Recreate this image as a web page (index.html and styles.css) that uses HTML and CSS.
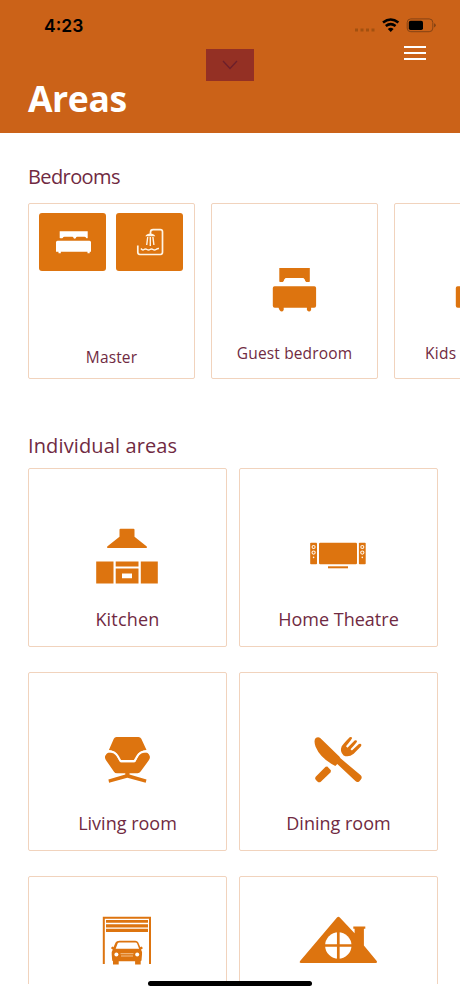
FILE: index.html
```html
<!DOCTYPE html>
<html lang="en">
<head>
<meta charset="utf-8">
<title>Areas</title>
<link rel="stylesheet" href="styles.css">
</head>
<body>
<header class="header">
  <div class="status">
    <span class="time">4:23</span>
    <svg class="indicators" width="84" height="20" viewBox="354 16 84 20">
      <path d="M355 28.500h3v3h-3zM360.500 28.500h3v3h-3zM366 28.500h3v3h-3zM371.500 28.500h3v3h-3z" fill="#a3500f"/>
      <path d="M383 22.500q7.700-6 15.400 0M385.800 26q4.900-3.800 9.800 0" fill="none" stroke="#000" stroke-width="2.600"/>
      <path d="M387.800 28.900q2.900-2.200 5.800 0l-2.900 3z"/>
      <rect x="407.200" y="18.900" width="25.600" height="12.800" rx="3.600" fill="none" stroke="#854314"/>
      <rect x="408.800" y="20.700" width="14.200" height="9.400" rx="1.800"/>
      <path d="M434 23.200q1.800.6 1.800 2.100t-1.800 2.100z" fill="#854314"/>
    </svg>
  </div>
  <div class="pulldown"><svg width="16" height="10" viewBox="0 0 16 10"><path d="M1 1l7 7.500L15 1" fill="none" stroke="#6c1f2b" stroke-width="1.300"/></svg></div>
  <div class="menu"><i></i><i></i><i></i></div>
  <h1>Areas</h1>
</header>
<main>
  <h2 class="bedrooms-title">Bedrooms</h2>
  <section class="rooms">
    <article class="card room master">
      <div class="tiles">
        <div class="tile"><svg width="67" height="58" viewBox="39 213 67 58" fill="#fff">
          <path d="M59.700 231.300h28v6.700q-.6.700-1.500 0-.6-1.200-1.800-1.200h-7.200q-1 0-1.500 1.400-1 .9-2 0-.5-1.400-1.500-1.400h-7.700q-1.200 0-1.800 1.200-.9.700-3 0z"/>
          <path d="M57.500 240.800h32q1.500 0 1.500 1.500v9.400h-1.300v1.600h-2.200v-1.600h-26.700v1.600h-2.300v-1.600H56v-9.400q0-1.500 1.500-1.500z"/>
        </svg></div>
        <div class="tile"><svg width="67" height="58" viewBox="116 213 67 58" fill="none" stroke="#fff4e4">
          <path d="M137.800 245.500v6.800q0 2.200 2.200 2.200h20.300q2.200 0 2.200-2.200v-20.500q0-2.200-2.200-2.200h-7.200q-2.600 0-2.600 2.600v1.800" stroke-width="1.700"/>
          <path d="M145.300 236.200q1.500-2.800 5-2.800t5 2.800z" fill="#fff4e4" stroke="none"/>
          <path d="M147.700 237l-1 8M150.300 237v9M152.900 237l1 8" stroke-width="1.400"/>
          <path d="M141 248.500q1.500 2.200 3 1t3 0 3 0 3 0 3 0 3-1" stroke-width="1.500"/>
        </svg></div>
      </div>
      <p>Master</p>
    </article>
    <article class="card room">
      <svg width="90" height="70" viewBox="250 253 90 70"><use href="#bed"/></svg>
      <p class="guest">Guest bedroom</p>
    </article>
    <article class="card room">
      <svg width="90" height="70" viewBox="250 253 90 70">
        <g id="bed"><path d="M279.300 268h30.500v13.500q-.7.900-3.500.4-1.300-.5-1.500-2.300l-1.400-1.600h-17.800l-1.400 1.600q-.2 1.800-1.500 2.300-2.700.5-3.400-.4z"/>
        <path d="M274.800 286.200h39.500q1.800 0 1.800 1.800v17.700q0 2-2 2h-3v2.300q-1.800 3.200-4.200 0v-2.300h-23.200v2.300q-1.800 3.200-4.200 0l-1-2.300h-3.700q-2 0-2-2V288q0-1.800 1.800-1.800z"/></g>
      </svg>
      <p class="kids">Kids bedroom</p>
    </article>
  </section>
  <h2 class="areas-title">Individual areas</h2>
  <section class="areas">
    <article class="card">
      <svg width="90" height="90" viewBox="83 498 90 90">
        <path d="M120.500 528.700h13q1 0 1 1v7l12.300 9.800v1.600H107.200v-1.600l12.300-9.800v-7q0-1 1-1z"/>
        <path d="M96.200 561.500h17.300v22H96.200zM115.700 561.500h22.800v5h-22.800zM140.800 561.500h17v22h-17z"/>
        <path fill-rule="evenodd" d="M115.700 568.500h22.800v15h-22.800zM122 573.500v4.800h10v-4.800z"/>
      </svg>
      <p class="kitchen">Kitchen</p>
    </article>
    <article class="card">
      <svg width="90" height="90" viewBox="294 498 90 90">
        <rect x="319" y="542.700" width="38" height="21.600" rx="1.200"/>
        <rect x="328" y="566.300" width="20" height="2"/>
        <g id="speaker"><rect x="310.200" y="542.700" width="6.800" height="21.600" rx=".8"/>
        <g fill="none" stroke="#fff3e5" stroke-width="1.100"><circle cx="313.600" cy="547" r="1.500"/><circle cx="313.600" cy="552.600" r="1.600"/></g><circle cx="313.600" cy="557.400" r=".8" fill="#fff3e5"/></g>
        <use href="#speaker" x="48.700"/>
      </svg>
      <p class="theatre">Home Theatre</p>
    </article>
    <article class="card">
      <svg width="90" height="90" viewBox="83 702 90 90">
        <path d="M105.500 755.500q1.500-3.200 5.600-3.200 3.900.2 5.400 3.300l3.500 6.200q.3.500 1 .5h13.400q.7 0 1-.5l3.300-6.200q1.600-3.300 5.300-3.300 4.400 0 5.600 3.400.9 2.300-.8 4.600l-8.200 11.300q-1.100 1.700-3.100 1.700h-8v1.300l17 4.800-.8 3.400-18.400-5-18.200 5-.7-3.300 16.900-4.900v-1.300h-8.300q-2 0-3-1.600l-8-11.500q-1.600-2.300-.7-4.700z"/>
        <path d="M116.500 737h22q1.800 0 2.800 1.700l5.200 11.300q-6.500.3-9 5l-2.500 4.500q-.3.500-1 .5h-13q-.7 0-1-.5l-2.500-4.500q-2.500-4.700-8.600-5l4.900-11.300q.9-1.700 2.700-1.700z"/>
        <path d="M108.600 751.200q6.600.3 9.200 5l2.400 4.300q.4.700 1 .7h12.600q.7 0 1-.7l2.400-4.300q2.500-4.600 9.400-5" fill="none" stroke="#fff" stroke-width="2"/>
      </svg>
      <p class="living">Living room</p>
    </article>
    <article class="card">
      <svg width="90" height="90" viewBox="294 702 90 90">
        <path d="M315.700 738q2.600-1.700 4.800.3l17.500 17q1.800 1.700 2.500 3l20.200 17q1.900 1.900.2 4.100l-1.700 2q-2 1.400-3.800-.3L337.300 764l-2 2q-14.900-7.500-19.700-19.200-2.200-6.200.1-8.800z"/>
        <path d="M325.600 766.800l1.700-.2 3.600 3.700-.2 1.900-9.900 9.500q-1.700 1.400-3.400-.3l-1.700-1.700q-1.300-1.500 0-2.900z"/>
        <path d="M349.700 737.200q1.900-.9 2.400.8.100.9-6.100 8.200l1.500 1.500 7.100-7.200q1.700-.9 2.400.5.500 1-6.500 8.200l1.400 1.300 7-6.500q1.700-.9 2.400.5.300 1-.5 1.900l-7.100 7.400q-5.300 4.100-10.100 1.600-4.100-3.400-2-8.800.9-2.100 8.100-9.400z"/>
      </svg>
      <p class="dining">Dining room</p>
    </article>
    <article class="card">
      <svg width="90" height="90" viewBox="83 906 90 90">
        <path d="M102.800 916.800h48.200V964h-2v-45.200h-44.200V964h-2zM106 920h42v2.800h-42zM106 924.300h42v3.100h-42zM106 928.800h42v3.200h-42z"/>
        <path fill-rule="evenodd" d="M119.500 940.700h15.700q2.200 0 3.100 1.800l2 4.700 1-.6q1.600.3 1.300 2.200l-1.600.8q1.300 1.800 1 5l-.5 5.900-.8.700v3.300h-5.600v-3.300h-16.400v3.300h-5.700v-3.300l-.8-.7-.5-5.900q-.2-3.200 1.100-5l-1.500-.8q-.4-1.900 1.200-2.200l1 .6 2.100-4.700q.8-1.800 3.900-1.800zm-.2 1.700q-1.200 0-1.700 1l-1.900 5.300h23.400l-2-5.300q-.4-1-1.600-1z"/>
        <g fill="#fff"><circle cx="116.400" cy="954.600" r="2"/><circle cx="137.200" cy="954.600" r="2"/></g>
        <path d="M120.500 953.700h13M121 956h12" stroke="#ffe3c2" stroke-width=".7"/>
      </svg>
    </article>
    <article class="card">
      <svg width="90" height="90" viewBox="294 906 90 90">
        <path d="M337 917.500q1.400-1.400 2.800 0l14.800 15.700v-4.400h-1.300v-2.300h12v2.300h-1.400v16.700l13 15.700q.6 1.700-1 1.700h-75q-1.900 0-1-1.700z"/>
        <circle cx="338.300" cy="945.500" r="13.200" fill="#fff"/>
        <path d="M338.300 932v27M325 945.500h27" stroke="#dd740f" stroke-width="2.700"/>
      </svg>
    </article>
  </section>
</main>
<div class="home-indicator"></div>
</body>
</html>
```

FILE: styles.css
```css
* { box-sizing: border-box; }
body {
  margin: 0;
  height: 996px;
  display: flex;
  flex-direction: column;
  position: relative;
  overflow: hidden;
  background: #fff;
  color: #702a42;
  font-family: "Open Sans", "Noto Sans", sans-serif;
}
h1, h2, p { margin: 0; font-weight: 400; white-space: nowrap; }
svg { display: block; }
.header {
  position: relative;
  flex: none;
  height: 133px;
  padding: 16px 22px 0 44px;
  background: #cb6218;
}
.status { display: flex; justify-content: space-between; height: 20px; }
.time {
  font: 600 17.500px/20px Inter, sans-serif;
  color: #000;
}
.header h1 {
  margin: 42px 0 0 -16px;
  font-size: 35.500px;
  line-height: 40px;
  font-weight: 700;
  letter-spacing: -0.400px;
  color: #fff;
}
.pulldown {
  position: absolute;
  left: 206px;
  top: 49px;
  width: 48px;
  height: 32px;
  display: grid;
  place-items: center;
  background: #943024;
}
.menu {
  position: absolute;
  right: 34px;
  top: 46px;
  width: 22px;
  display: grid;
  gap: 4px;
}
.menu i { height: 2px; background: #fff; }
main { height: 851px; overflow: hidden; padding: 1px 0 0 28px; }
h2 { font-size: 20px; line-height: 28px; }
.bedrooms-title { margin-top: 29px; letter-spacing: -0.600px; }
.rooms { display: flex; gap: 16px; margin-top: 12px; }
.card {
  border: 1px solid #f1d3bd;
  border-radius: 2px;
  display: flex;
  flex-direction: column;
  align-items: center;
  padding-top: 29px;
  fill: #dd740f;
}
.card p { margin-top: 19px; font-size: 18px; line-height: 24px; }
.card .kitchen { letter-spacing: 0.200px; }
.card.room { flex: none; width: 167px; height: 176px; padding-top: 49px; }
.card.room p { margin-top: 18px; font-size: 15.500px; letter-spacing: 0.150px; }
.card.room .kids { letter-spacing: 0.300px; }
.card.master { padding-top: 9px; }
.card.master p { margin-top: 74px; }
.tiles { display: flex; gap: 10px; margin-left: -1px; }
.tile { width: 67px; height: 58px; border-radius: 3px; background: #dd740f; }
.areas-title { margin-top: 53px; letter-spacing: 0.130px; }
.areas {
  display: grid;
  grid-template-columns: 199px 199px;
  grid-auto-rows: 179px;
  gap: 25px 12px;
  margin-top: 8px;
}
.home-indicator {
  position: absolute;
  left: 148px;
  top: 981px;
  width: 164px;
  height: 5px;
  border-radius: 3px;
  background: #000;
}
```
